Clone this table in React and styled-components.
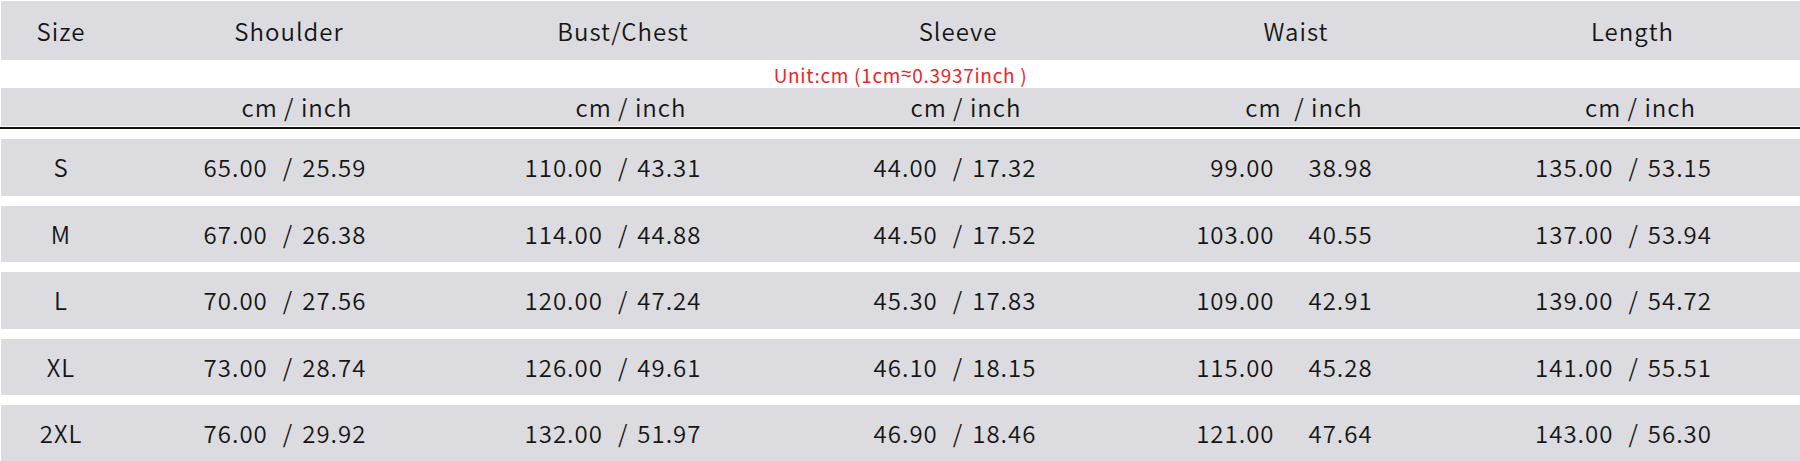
import styled, { createGlobalStyle } from 'styled-components';

const GlobalStyle = createGlobalStyle`
  html, body {
    margin: 0;
    padding: 0;
    background: #fff;
  }
  body {
    font-family: "Noto Sans CJK SC", "Noto Sans", sans-serif;
    color: #151515;
  }
`;

const Chart = styled.div`
  width: 1800px;
  height: 461px;
  padding: 1px 0 0 1px;
  box-sizing: border-box;
  background: #fff;
  overflow: hidden;
`;

const Band = styled.div`
  display: grid;
  grid-template-columns: 120px 336px 332px 338px 338px 1fr;
  align-items: center;
  background: #dcdce0;
  height: ${(p) => p.$height}px;
  margin-top: ${(p) => p.$gap || 0}px;
`;

const Cell = styled.div`
  text-align: center;
  white-space: pre;
  font-size: 24px;
  font-weight: 350;
  line-height: 1;
  letter-spacing: 1px;
  padding-left: ${(p) => (p.$nudge > 0 ? p.$nudge * 2 : 0)}px;
  padding-right: ${(p) => (p.$nudge < 0 ? -p.$nudge * 2 : 0)}px;
`;

const Sep = styled.span`
  margin: 0 9px 0 15px;
`;

const SplitCell = styled.div`
  display: grid;
  grid-template-columns: 1fr 1fr;
  column-gap: 34px;
  font-size: 24px;
  font-weight: 350;
  line-height: 1;
  letter-spacing: 1px;
  padding-right: 9px;
  & > span:first-child {
    text-align: right;
  }
`;

const UnitNote = styled.div`
  height: 28px;
  display: flex;
  align-items: center;
  justify-content: center;
  color: #e8262b;
  font-size: 19px;
  letter-spacing: 0.7px;
  white-space: pre;
`;

const Approx = styled.span`
  font-family: "Liberation Sans", sans-serif;
`;

const Rule = styled.div`
  height: 2px;
  margin: 1px 0 10px -1px;
  background: #111;
`;

const columns = ['Size', 'Shoulder', 'Bust/Chest', 'Sleeve', 'Waist', 'Length'];
const units = ['', 'cm / inch', 'cm / inch', 'cm / inch', 'cm  / inch', 'cm / inch'];
const dataNudge = [0, -4, -10, -3, 0, -9];

const rows = [
  ['S', ['65.00', '25.59'], ['110.00', '43.31'], ['44.00', '17.32'], ['99.00', '38.98'], ['135.00', '53.15']],
  ['M', ['67.00', '26.38'], ['114.00', '44.88'], ['44.50', '17.52'], ['103.00', '40.55'], ['137.00', '53.94']],
  ['L', ['70.00', '27.56'], ['120.00', '47.24'], ['45.30', '17.83'], ['109.00', '42.91'], ['139.00', '54.72']],
  ['XL', ['73.00', '28.74'], ['126.00', '49.61'], ['46.10', '18.15'], ['115.00', '45.28'], ['141.00', '55.51']],
  ['2XL', ['76.00', '29.92'], ['132.00', '51.97'], ['46.90', '18.46'], ['121.00', '47.64'], ['143.00', '56.30']],
];

export default function App() {
  return (
    <>
      <GlobalStyle />
      <Chart>
        <Band $height={59}>
          {columns.map((c) => (
            <Cell key={c}>{c}</Cell>
          ))}
        </Band>
        <UnitNote>
          Unit:cm (1cm<Approx>≈</Approx>0.3937inch )
        </UnitNote>
        <Band $height={38}>
          {units.map((u, i) => (
            <Cell key={i} $nudge={i === 0 ? 0 : 8}>{u}</Cell>
          ))}
        </Band>
        <Rule />
        {rows.map((r, ri) => (
          <Band key={r[0]} $height={56.5} $gap={ri === 0 ? 0 : 10}>
            <Cell>{r[0]}</Cell>
            {r.slice(1).map((v, i) =>
              i + 1 === 4 ? (
                <SplitCell key={i}>
                  <span>{v[0]}</span>
                  <span>{v[1]}</span>
                </SplitCell>
              ) : (
                <Cell key={i} $nudge={dataNudge[i + 1]}>
                  {v[0]}
                  <Sep>/</Sep>
                  {v[1]}
                </Cell>
              )
            )}
          </Band>
        ))}
      </Chart>
    </>
  );
}
